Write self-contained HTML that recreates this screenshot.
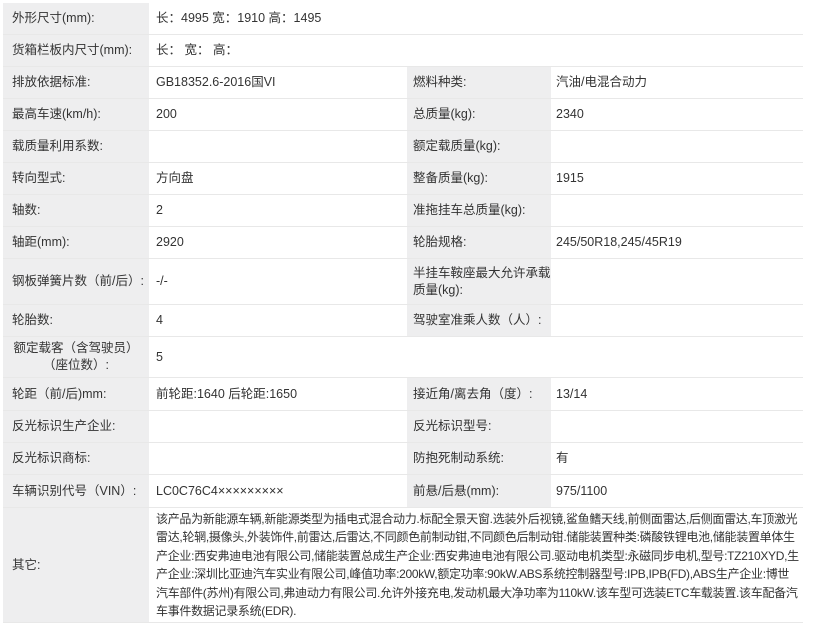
<!DOCTYPE html>
<html><head><meta charset="utf-8"><style>
body{margin:0;width:820px;height:627px;background:#fff;position:relative;overflow:hidden;font-family:"Liberation Sans","Noto Sans CJK SC",sans-serif;font-size:12.5px;color:#333}
.r{position:absolute;left:3px;width:800px;border-bottom:1px solid #e8e8e8}
.c{position:absolute;top:0;bottom:0;display:flex;align-items:center;box-sizing:border-box;line-height:17px}
.l1{left:0;width:146px;background:#eeeeef;padding-left:9px}
.v1{left:148px;width:256px;padding-left:5px}
.l2{left:404px;width:144px;background:#eeeeef;padding-left:6px}
.v2{left:548px;width:252px;padding-left:5px}
.vf{left:148px;width:652px;padding-left:5px}
</style></head><body>
<div class="r" style="top:3px;height:31px"><div class="c l1">外形尺寸(mm):</div><div class="c vf">长：4995 宽：1910 高：1495</div></div>
<div class="r" style="top:35px;height:31px"><div class="c l1">货箱栏板内尺寸(mm):</div><div class="c vf">长：&nbsp;宽：&nbsp;高：</div></div>
<div class="r" style="top:67px;height:31px"><div class="c l1">排放依据标准:</div><div class="c v1">GB18352.6-2016国VI</div><div class="c l2">燃料种类:</div><div class="c v2">汽油/电混合动力</div></div>
<div class="r" style="top:99px;height:31px"><div class="c l1">最高车速(km/h):</div><div class="c v1">200</div><div class="c l2">总质量(kg):</div><div class="c v2">2340</div></div>
<div class="r" style="top:131px;height:31px"><div class="c l1">载质量利用系数:</div><div class="c v1"></div><div class="c l2">额定载质量(kg):</div><div class="c v2"></div></div>
<div class="r" style="top:163px;height:31px"><div class="c l1">转向型式:</div><div class="c v1">方向盘</div><div class="c l2">整备质量(kg):</div><div class="c v2">1915</div></div>
<div class="r" style="top:195px;height:31px"><div class="c l1">轴数:</div><div class="c v1">2</div><div class="c l2">准拖挂车总质量(kg):</div><div class="c v2"></div></div>
<div class="r" style="top:227px;height:31px"><div class="c l1">轴距(mm):</div><div class="c v1">2920</div><div class="c l2">轮胎规格:</div><div class="c v2">245/50R18,245/45R19</div></div>
<div class="r" style="top:259px;height:45px"><div class="c l1">钢板弹簧片数（前/后）:</div><div class="c v1">-/-</div><div class="c l2">半挂车鞍座最大允许承载质量(kg):</div><div class="c v2"></div></div>
<div class="r" style="top:305px;height:31px"><div class="c l1">轮胎数:</div><div class="c v1">4</div><div class="c l2">驾驶室准乘人数（人）:</div><div class="c v2"></div></div>
<div class="r" style="top:337px;height:40px"><div class="c l1" style="justify-content:center;text-align:center;padding:0">额定载客（含驾驶员）<br>（座位数）:</div><div class="c vf">5</div></div>
<div class="r" style="top:378px;height:32px"><div class="c l1">轮距（前/后)mm:</div><div class="c v1">前轮距:1640 后轮距:1650</div><div class="c l2">接近角/离去角（度）:</div><div class="c v2">13/14</div></div>
<div class="r" style="top:411px;height:31px"><div class="c l1">反光标识生产企业:</div><div class="c v1"></div><div class="c l2">反光标识型号:</div><div class="c v2"></div></div>
<div class="r" style="top:443px;height:31px"><div class="c l1">反光标识商标:</div><div class="c v1"></div><div class="c l2">防抱死制动系统:</div><div class="c v2">有</div></div>
<div class="r" style="top:475px;height:32px"><div class="c l1">车辆识别代号（VIN）:</div><div class="c v1">LC0C76C4×××××××××</div><div class="c l2">前悬/后悬(mm):</div><div class="c v2">975/1100</div></div>
<div class="r" style="top:508px;height:114px"><div class="c l1">其它:</div><div class="c vf" style="font-size:12px;line-height:18.5px;letter-spacing:-0.3px;padding-right:4px">该产品为新能源车辆,新能源类型为插电式混合动力.标配全景天窗.选装外后视镜,鲨鱼鳍天线,前侧面雷达,后侧面雷达,车顶激光雷达,轮辋,摄像头,外装饰件,前雷达,后雷达,不同颜色前制动钳,不同颜色后制动钳.储能装置种类:磷酸铁锂电池,储能装置单体生产企业:西安弗迪电池有限公司,储能装置总成生产企业:西安弗迪电池有限公司.驱动电机类型:永磁同步电机,型号:TZ210XYD,生产企业:深圳比亚迪汽车实业有限公司,峰值功率:200kW,额定功率:90kW.ABS系统控制器型号:IPB,IPB(FD),ABS生产企业:博世汽车部件(苏州)有限公司,弗迪动力有限公司.允许外接充电,发动机最大净功率为110kW.该车型可选装ETC车载装置.该车配备汽车事件数据记录系统(EDR).</div></div>
</body></html>
